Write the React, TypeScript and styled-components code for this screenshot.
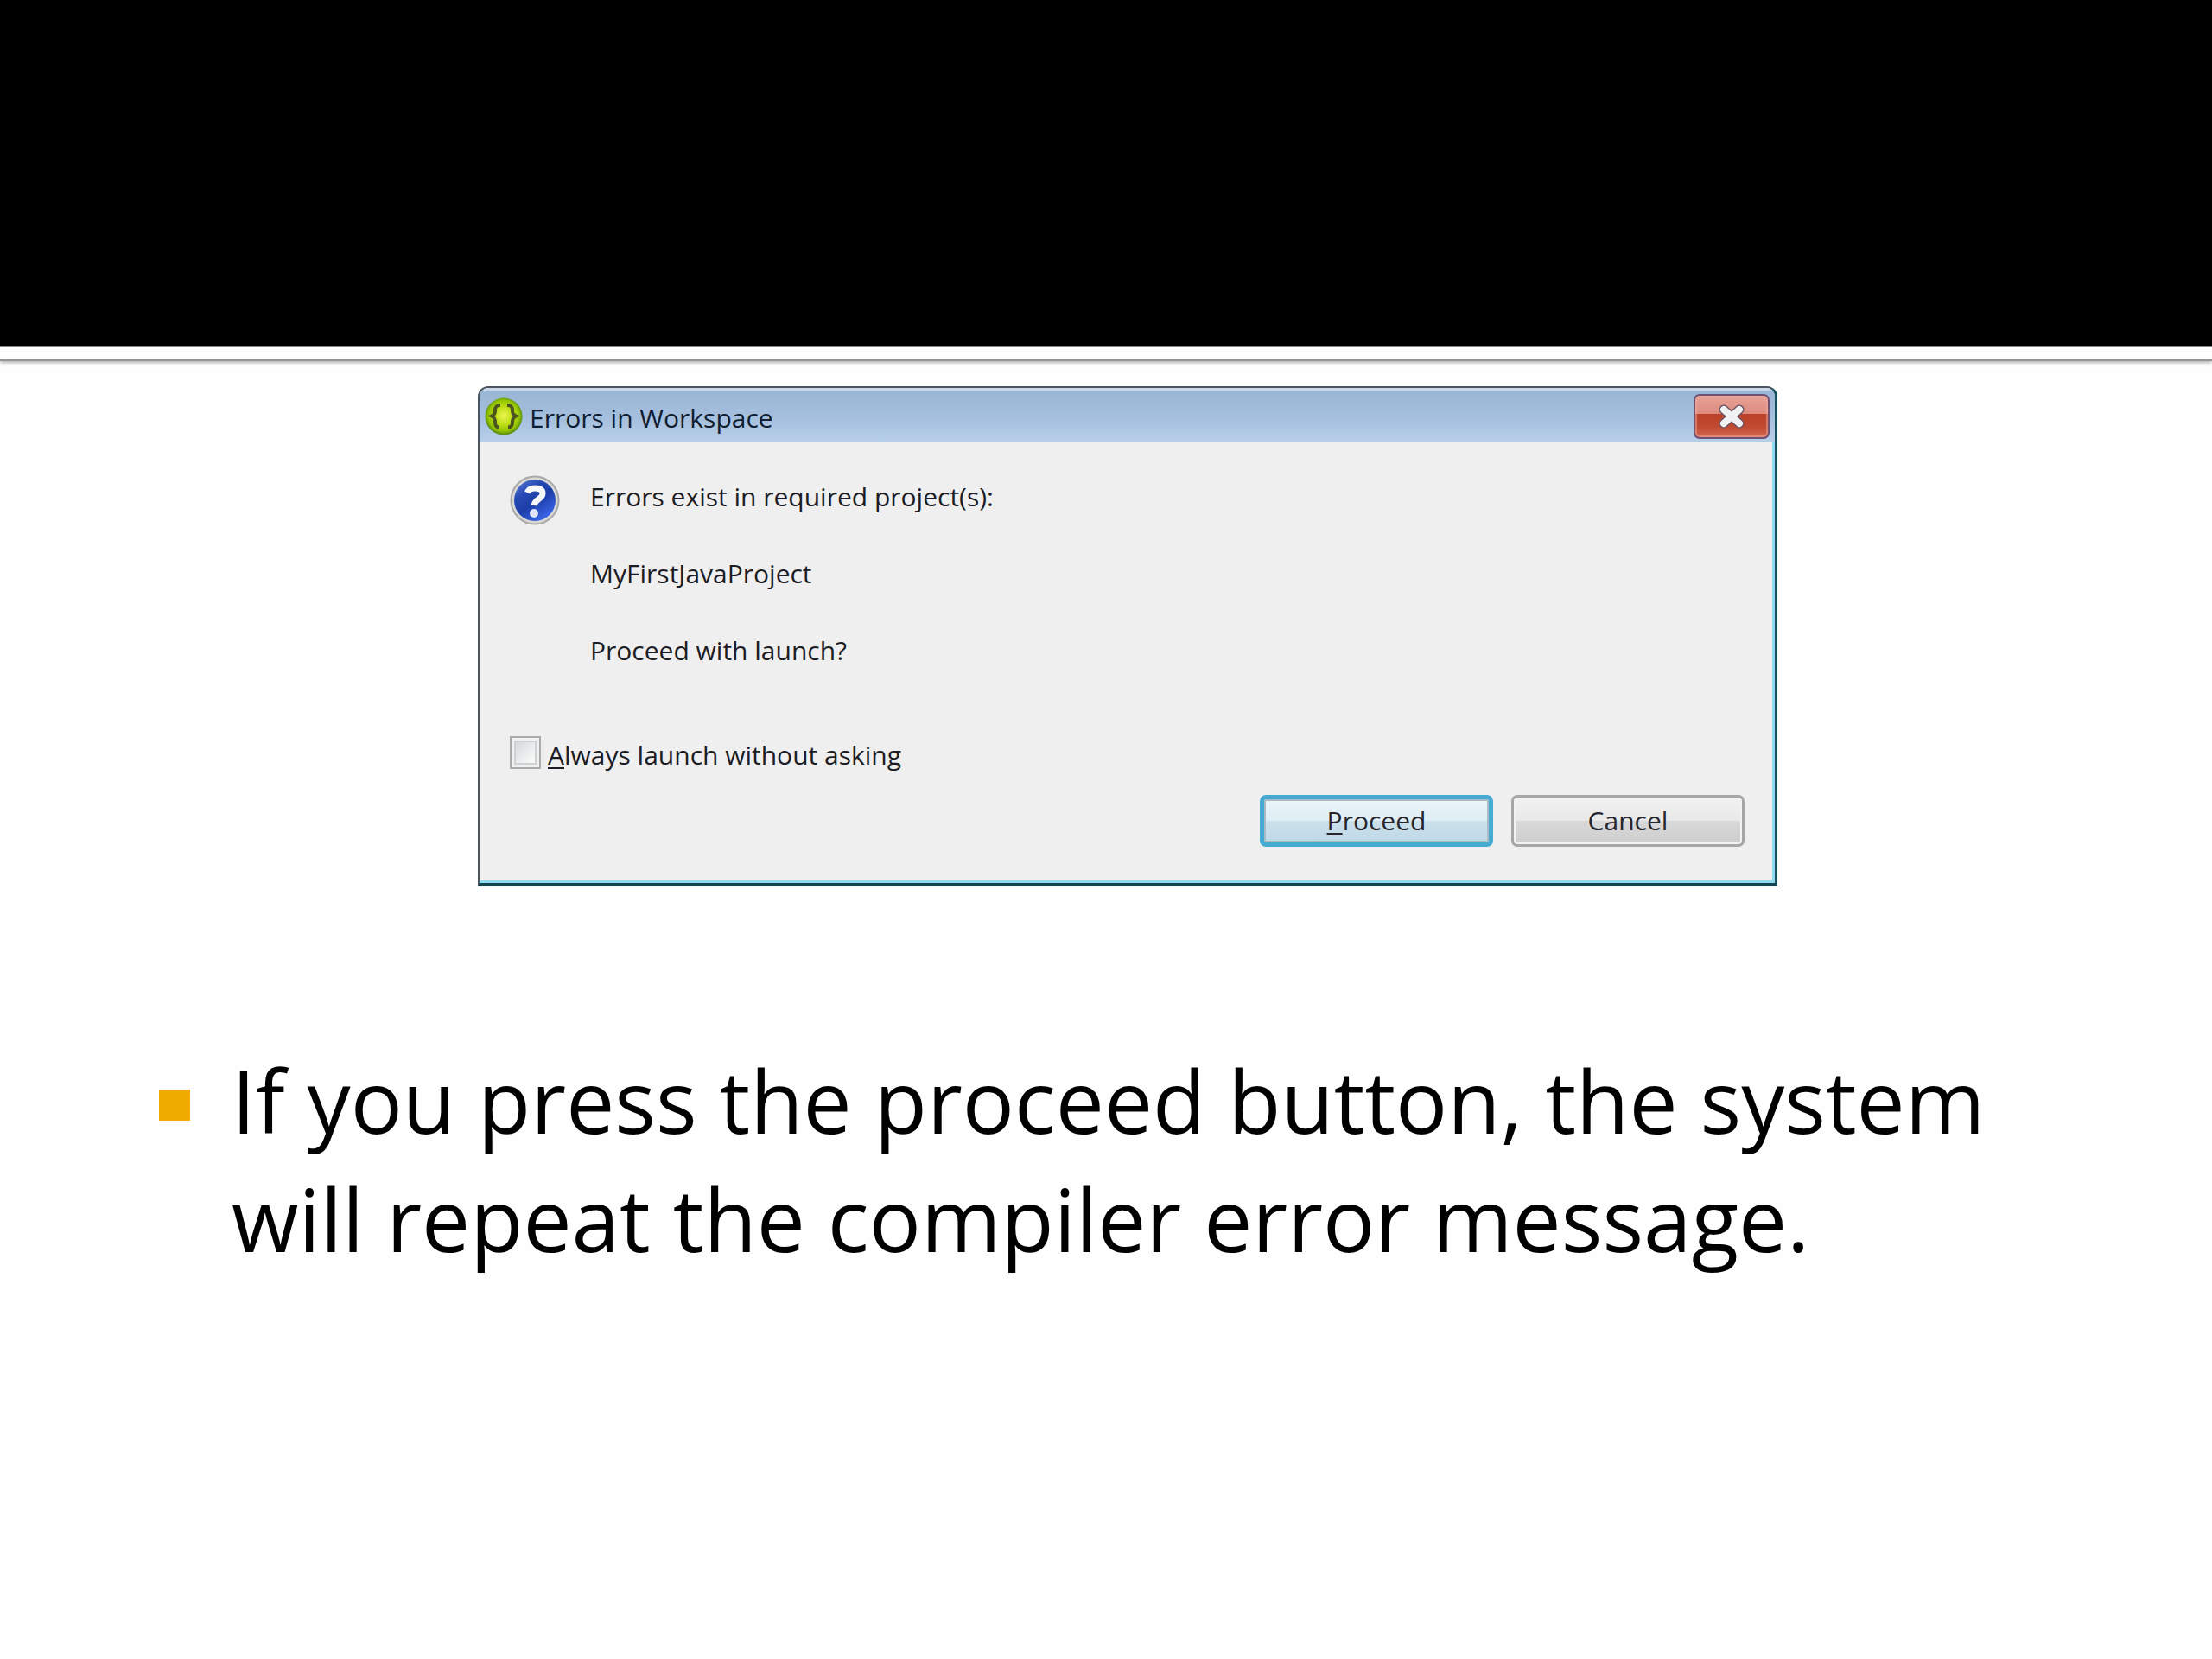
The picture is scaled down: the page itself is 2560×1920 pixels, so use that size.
import React from "react";
import styled, { createGlobalStyle, css } from "styled-components";

const GlobalStyle = createGlobalStyle`
  *, *::before, *::after { box-sizing: border-box; }
  body { margin: 0; background: #fff; color: #000; }
`;

const Slide = styled.main`
  min-height: 100vh;
  display: flex;
  flex-direction: column;
  background: #fefefe;
  font-family: "Open Sans", "Noto Sans", sans-serif;
`;

const Band = styled.header`
  height: 401px;
  background: #000;
`;

const Rule = styled.div`
  height: 17px;
  margin-bottom: 29px;
  border-top: 1px solid #8a8484;
  border-bottom: 3px solid #949494;
  background: #fff;
  box-shadow: 0 2px 4px rgba(0, 0, 0, 0.3);
`;

const Stage = styled.div`
  display: flex;
  justify-content: center;
  padding: 0 0 0 50px;
`;

const Dialog = styled.section`
  width: 100%;
  max-width: 1504px;
  border: 2px solid #4b5560;
  border-right: 3px solid #17505c;
  border-bottom: 3px solid #114552;
  border-radius: 12px 12px 0 0;
  overflow: hidden;
  background: #efefef;
  box-shadow: inset -3px -3px 0 #8fdcf0;
  color: #1c1c24;
  font-size: 30px;
  line-height: 44px;
`;

const TitleBar = styled.div`
  display: flex;
  align-items: center;
  gap: 8px;
  height: 63px;
  padding: 0 6px;
  border-top: 3px solid #c9d9ea;
  background: linear-gradient(#9ab6d5, #a4bedd 50%, #b7cfe9);
`;

const Title = styled.h1`
  flex: 1;
  margin: 0;
  padding-top: 4px;
  font-size: 30px;
  line-height: 44px;
  font-weight: 400;
  color: #101c30;
`;

const CloseButton = styled.button`
  display: flex;
  align-items: center;
  justify-content: center;
  width: 88px;
  height: 52px;
  padding: 0;
  border: 2px solid #6d5272;
  border-radius: 7px;
  background: linear-gradient(#e5a398, #e08a7e 43%, #bb4129 44%, #c04a30 75%, #d4694f);
  box-shadow: inset 0 0 0 2px rgba(240, 170, 160, 0.5);
`;

const Body = styled.div`
  display: flex;
  flex-direction: column;
  padding: 38px 35px 42px;
`;

const Message = styled.div`
  display: flex;
  align-items: flex-start;
  gap: 35px;
  margin-bottom: 77px;
`;

const Lines = styled.div`
  display: flex;
  flex-direction: column;
  gap: 45px;
  padding-top: 3px;
`;

const Line = styled.p`
  margin: 0;
`;

const Option = styled.label`
  display: flex;
  align-items: flex-start;
  gap: 8px;
`;

const CheckBox = styled.input`
  appearance: none;
  width: 36px;
  height: 38px;
  margin: 0;
  border: 2px solid #a9abad;
  background: linear-gradient(135deg, #cdd1d5, #f6f7f7 75%);
  box-shadow: inset 0 0 0 3px #f1f1f1, inset 0 0 0 5px #cfd2d5;
`;

const Actions = styled.div`
  display: flex;
  justify-content: flex-end;
  gap: 21px;
  padding-top: 24px;
`;

const ActionButton = styled.button<{ $primary?: boolean }>`
  width: 270px;
  height: 60px;
  padding: 0;
  border-radius: 7px;
  color: #26262c;
  font: inherit;
  ${({ $primary }) =>
    $primary
      ? css`
          border: 5px solid #45abd3;
          background: linear-gradient(#eaf4f8, #dfeef5 49%, #cbe1ec 50%, #bfd8e6);
          box-shadow: inset 0 0 0 2px #a9bcc6;
        `
      : css`
          border: 3px solid #a6a6a6;
          background: linear-gradient(#f1f1f1, #e9e9e9 49%, #d9d9d9 50%, #cdcdcd);
          box-shadow: inset 0 0 0 2px #f2f2f2;
        `}
`;

const AccessKey = styled.span`
  text-decoration: underline;
  text-decoration-thickness: 2px;
  text-underline-offset: 3px;
`;

const Bullets = styled.ul`
  margin: 0;
  padding: 180px 184px 0;
  list-style: none;
  font-size: 100px;
  line-height: 137px;
`;

const Bullet = styled.li`
  display: flex;
  align-items: flex-start;
  gap: 48px;

  &::before {
    content: "";
    flex: none;
    width: 36px;
    height: 36px;
    margin-top: 56px;
    background: #efab00;
  }
`;

const BracesIcon = () => (
  <svg width="44" height="44" viewBox="0 0 44 44" aria-hidden="true">
    <defs>
      <radialGradient id="lime" cx="50%" cy="48%" r="52%">
        <stop offset="0" stopColor="#eef650" />
        <stop offset="0.5" stopColor="#b9dc10" />
        <stop offset="0.8" stopColor="#94c400" />
        <stop offset="1" stopColor="#4f8412" />
      </radialGradient>
    </defs>
    <circle cx="22" cy="22" r="21.500" fill="url(#lime)" />
    <path d="M18 9c-5 0-6 2-6 6 0 4-1 5-4 6.500 3 1.500 4 3 4 7 0 4 1 6 5 6M26 9c5 0 6 2 6 6 0 4 1 5 4 6.500-3 1.500-4 3-4 7 0 4-1 6-5 6" fill="none" stroke="#4c5420" strokeWidth="4" />
  </svg>
);

const QuestionIcon = () => (
  <svg width="58" height="58" viewBox="0 0 58 58" aria-hidden="true">
    <defs>
      <linearGradient id="blue" x1="0" y1="0" x2="0.7" y2="1">
        <stop offset="0" stopColor="#5f7fd6" />
        <stop offset="0.35" stopColor="#2549b4" />
        <stop offset="0.6" stopColor="#1d3ea6" />
        <stop offset="1" stopColor="#3c68ee" />
      </linearGradient>
    </defs>
    <circle cx="29" cy="29" r="27.500" fill="#d9d9d6" stroke="#a9a9a9" strokeWidth="2" />
    <circle cx="29" cy="29" r="24" fill="url(#blue)" />
    <path d="M20 20c2-4 5-5 9-5 6 0 9 2 9 6 0 7-9 6-10 14" fill="none" stroke="#f7f8fc" strokeWidth="7" />
    <circle cx="28" cy="44" r="5" fill="#dfe5f8" />
  </svg>
);

const CloseIcon = () => (
  <svg width="34" height="30" viewBox="0 0 34 30" aria-hidden="true">
    <path d="M8 7l18 16M26 7L8 23" stroke="#6a5463" strokeWidth="11" strokeLinecap="round" />
    <path d="M8 7l18 16M26 7L8 23" stroke="#f1f1f3" strokeWidth="8" strokeLinecap="round" />
  </svg>
);

export default function App() {
  return (
    <>
      <GlobalStyle />
      <Slide>
        <Band />
        <Rule />
        <Stage>
          <Dialog role="dialog" aria-labelledby="dialog-title">
            <TitleBar>
              <BracesIcon />
              <Title id="dialog-title">Errors in Workspace</Title>
              <CloseButton type="button" aria-label="Close">
                <CloseIcon />
              </CloseButton>
            </TitleBar>
            <Body>
              <Message>
                <QuestionIcon />
                <Lines>
                  <Line>Errors exist in required project(s):</Line>
                  <Line>MyFirstJavaProject</Line>
                  <Line>Proceed with launch?</Line>
                </Lines>
              </Message>
              <Option htmlFor="always">
                <CheckBox id="always" type="checkbox" />
                <span>
                  <AccessKey>A</AccessKey>lways launch without asking
                </span>
              </Option>
              <Actions>
                <ActionButton type="button" $primary>
                  <AccessKey>P</AccessKey>roceed
                </ActionButton>
                <ActionButton type="button">Cancel</ActionButton>
              </Actions>
            </Body>
          </Dialog>
        </Stage>
        <Bullets>
          <Bullet>If you press the proceed button, the system will repeat the compiler error message.</Bullet>
        </Bullets>
      </Slide>
    </>
  );
}
